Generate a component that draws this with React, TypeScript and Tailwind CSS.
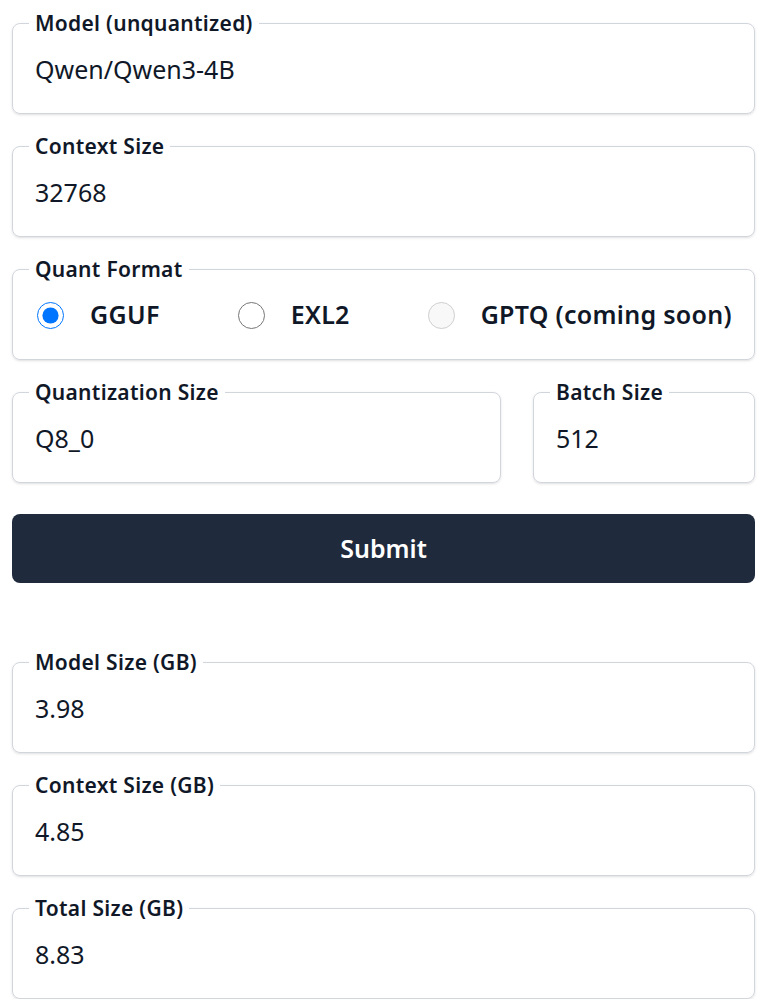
import React, { useState } from 'react';

const font = { fontFamily: '"Noto Sans", "Open Sans", sans-serif' };

interface FieldProps {
  label: string;
  value: string;
  className?: string;
  readOnly?: boolean;
}

const Field: React.FC<FieldProps> = ({ label, value, className = '', readOnly }) => {
  const [val, setVal] = useState(value);
  return (
    <fieldset className={`border border-gray-300 rounded-lg px-4 pb-[20px] shadow-sm ${className}`}>
      <legend className="px-1.5 text-[21px] leading-6 font-semibold tracking-[0.3px] text-gray-900">{label}</legend>
      <input
        className="w-full h-[48px] mt-[10px] px-1.5 text-[25px] text-gray-900 bg-transparent outline-none"
        style={font}
        value={val}
        readOnly={readOnly}
        onChange={(e) => setVal(e.target.value)}
      />
    </fieldset>
  );
};

export default function App() {
  const [format, setFormat] = useState('gguf');

  const formats = [
    { id: 'gguf', label: 'GGUF' },
    { id: 'exl2', label: 'EXL2' },
    { id: 'gptq', label: 'GPTQ (coming soon)', disabled: true },
  ];

  return (
    <div className="bg-white pl-3 pr-[11px] pt-[11px] flex flex-col" style={font}>
      <Field label="Model (unquantized)" value="Qwen/Qwen3-4B" />
      <Field label="Context Size" value="32768" className="mt-[20px]" />

      {/* Quant format radios */}
      <fieldset className="mt-[20px] border border-gray-300 rounded-lg pl-5 pr-4 pb-[20px] shadow-sm">
        <legend className="-ml-1 px-1.5 text-[21px] leading-6 font-semibold tracking-[0.3px] text-gray-900">Quant Format</legend>
        <div className="mt-[10px] h-[48px] flex items-center justify-between pl-1 pr-[6px]">
          {formats.map((f) => (
            <label key={f.id} className="flex items-center gap-[26px] cursor-pointer">
              <input
                type="radio"
                name="format"
                className="w-[27px] h-[27px] m-0"
                checked={format === f.id}
                disabled={f.disabled}
                onChange={() => setFormat(f.id)}
              />
              <span className="text-[25px] font-semibold tracking-[0.3px] text-gray-900">{f.label}</span>
            </label>
          ))}
        </div>
      </fieldset>

      <div className="mt-[20px] grid grid-cols-[1fr_222px] gap-[32px]">
        <Field label="Quantization Size" value="Q8_0" />
        <Field label="Batch Size" value="512" />
      </div>

      <button className="mt-[31px] h-[69px] rounded-lg bg-[#1f2a3c] text-white text-[25px] font-semibold">
        Submit
      </button>

      <Field label="Model Size (GB)" value="3.98" className="mt-[67px]" readOnly />
      <Field label="Context Size (GB)" value="4.85" className="mt-[20px]" readOnly />
      <Field label="Total Size (GB)" value="8.83" className="mt-[20px]" readOnly />
    </div>
  );
}
